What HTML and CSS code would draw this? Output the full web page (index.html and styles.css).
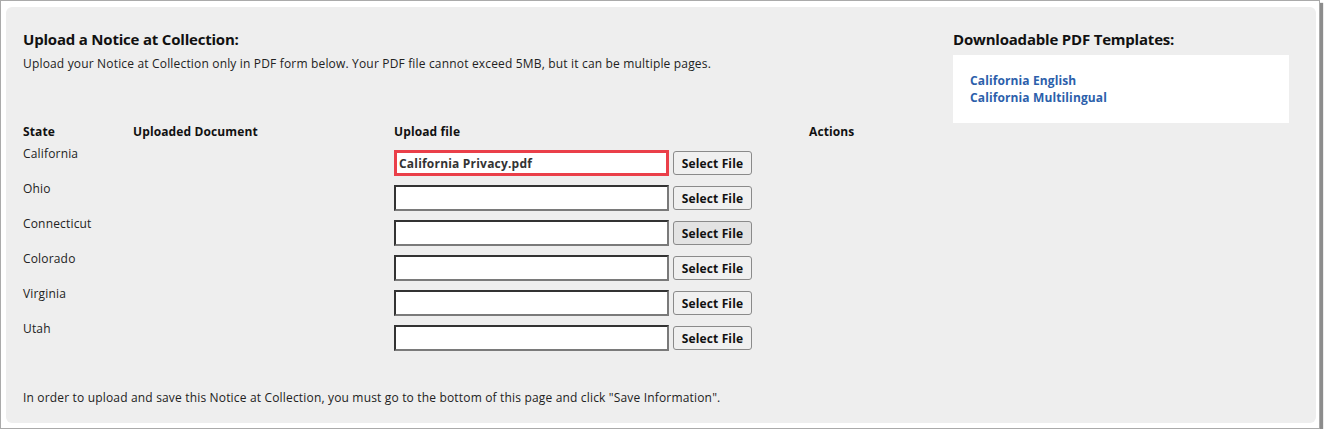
FILE: index.html
```html
<!DOCTYPE html>
<html lang="en">
<head>
    <meta charset="UTF-8">
    <meta name="viewport" content="width=device-width, initial-scale=1.0">
    <title>Notice at Collection</title>
    <link rel="stylesheet" href="styles.css">
</head>
<body>
    <div class="frame">
        <div class="panel">
            <div class="main">
                <h2>Upload a Notice at Collection:</h2>
                <p class="intro">Upload your Notice at Collection only in PDF form below. Your PDF file cannot exceed 5MB, but it can be multiple pages.</p>

                <table class="states">
                    <colgroup>
                        <col class="col-state">
                        <col class="col-doc">
                        <col class="col-upload">
                        <col>
                    </colgroup>
                    <thead>
                        <tr>
                            <th>State</th>
                            <th>Uploaded Document</th>
                            <th>Upload file</th>
                            <th>Actions</th>
                        </tr>
                    </thead>
                    <tbody>
                        <tr>
                            <td>California</td>
                            <td></td>
                            <td>
                                <div class="upload">
                                    <input type="text" class="file-name highlight" value="California Privacy.pdf" readonly>
                                    <button type="button">Select File</button>
                                </div>
                            </td>
                            <td></td>
                        </tr>
                        <tr>
                            <td>Ohio</td>
                            <td></td>
                            <td>
                                <div class="upload">
                                    <input type="text" class="file-name" readonly>
                                    <button type="button">Select File</button>
                                </div>
                            </td>
                            <td></td>
                        </tr>
                        <tr>
                            <td>Connecticut</td>
                            <td></td>
                            <td>
                                <div class="upload">
                                    <input type="text" class="file-name" readonly>
                                    <button type="button" class="pressed">Select File</button>
                                </div>
                            </td>
                            <td></td>
                        </tr>
                        <tr>
                            <td>Colorado</td>
                            <td></td>
                            <td>
                                <div class="upload">
                                    <input type="text" class="file-name" readonly>
                                    <button type="button">Select File</button>
                                </div>
                            </td>
                            <td></td>
                        </tr>
                        <tr>
                            <td>Virginia</td>
                            <td></td>
                            <td>
                                <div class="upload">
                                    <input type="text" class="file-name" readonly>
                                    <button type="button">Select File</button>
                                </div>
                            </td>
                            <td></td>
                        </tr>
                        <tr>
                            <td>Utah</td>
                            <td></td>
                            <td>
                                <div class="upload">
                                    <input type="text" class="file-name" readonly>
                                    <button type="button">Select File</button>
                                </div>
                            </td>
                            <td></td>
                        </tr>
                    </tbody>
                </table>

                <p class="note">In order to upload and save this Notice at Collection, you must go to the bottom of this page and click "Save Information".</p>
            </div>

            <div class="templates">
                <h2>Downloadable PDF Templates:</h2>
                <div class="template-box">
                    <a href="#">California English</a>
                    <a href="#">California Multilingual</a>
                </div>
            </div>
        </div>
    </div>
</body>
</html>
```

FILE: styles.css
```css
body {
    margin: 0;
    font-family: "Open Sans", "Liberation Sans", sans-serif;
    font-size: 12px;
    letter-spacing: 0.17px;
    color: #222;
    background-color: #fff;
}

.frame {
    box-sizing: border-box;
    width: 1320px;
    height: 429px;
    padding: 6px 3px 5px 5px;
    border: 1px solid #aaa;
    box-shadow: 3px 3px 1px #8c8c8c;
    background-color: #fff;
}

.panel {
    display: flex;
    height: 100%;
    box-sizing: border-box;
    padding: 22px 27px 0 17px;
    background-color: #eee;
    border-radius: 6px;
}

.main {
    flex: 1;
}

h2 {
    margin: 0;
    font-size: 15px;
    line-height: 20px;
    font-weight: bold;
    letter-spacing: -0.2px;
    color: #111;
}

.intro {
    margin: 7px 0 0;
    line-height: 16px;
}

.states {
    margin-top: 51px;
    border-collapse: collapse;
    table-layout: fixed;
    width: 100%;
}

.col-state {
    width: 110px;
}

.col-doc {
    width: 261px;
}

.col-upload {
    width: 415px;
}

.states th {
    padding: 1px 0 0;
    height: 21px;
    text-align: left;
    vertical-align: top;
    line-height: 16px;
    letter-spacing: 0.12px;
    color: #111;
}

.states td {
    padding: 1px 0 0;
    height: 34px;
    vertical-align: top;
    line-height: 16px;
}

.upload {
    display: flex;
    align-items: center;
    gap: 4px;
    margin-top: 4px;
}

.file-name {
    box-sizing: border-box;
    width: 275px;
    height: 26px;
    padding: 0 0 0 3px;
    border: 2px solid;
    border-color: #333 #7a7a7a #7a7a7a #333;
    background-color: #fff;
    font-family: inherit;
    font-size: 12px;
    font-weight: bold;
    letter-spacing: 0.2px;
    color: #333;
    outline: none;
}

.file-name.highlight {
    border: 3px solid #ea3f49;
    padding-left: 2px;
}

button {
    box-sizing: border-box;
    width: 79px;
    height: 24px;
    padding: 0;
    border: 1px solid #8a8a8a;
    border-radius: 3px;
    background-color: #f0f0f0;
    font-family: inherit;
    font-size: 12px;
    font-weight: bold;
    letter-spacing: 0.12px;
    color: #111;
    cursor: pointer;
}

button.pressed {
    background-color: #e3e3e3;
}

.note {
    margin: 35px 0 0;
    line-height: 16px;
}

.templates {
    width: 336px;
}

.template-box {
    margin-top: 6px;
    padding: 17px;
    background-color: #fff;
}

.template-box a {
    display: block;
    line-height: 17px;
    font-weight: bold;
    letter-spacing: 0.12px;
    color: #2c5fab;
    text-decoration: none;
}

.template-box a:hover {
    text-decoration: underline;
}
```
